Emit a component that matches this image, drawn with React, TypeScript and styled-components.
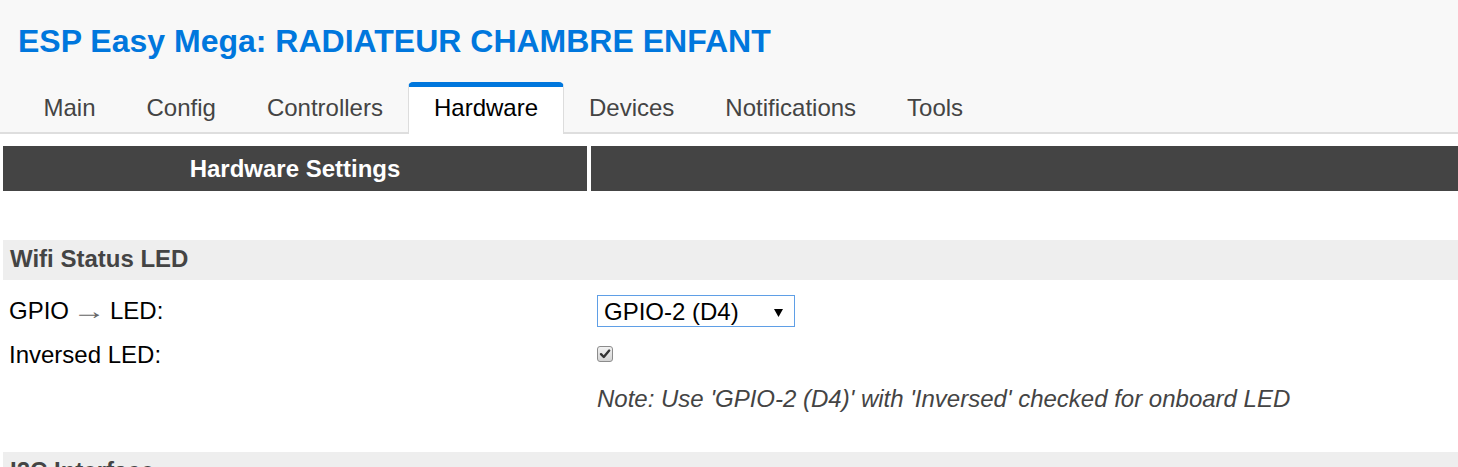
import React from 'react';
import styled, { createGlobalStyle, css } from 'styled-components';

const GlobalStyle = createGlobalStyle`
  html, body { margin: 0; padding: 0; background: #fff; }
  body {
    font-family: "Liberation Sans", Arial, Helvetica, sans-serif;
    font-size: 24px;
    color: #000;
  }
  * { box-sizing: border-box; }
`;

const Header = styled.header`
  background: #f8f8f8;
  border-bottom: 2px solid #dedede;
  padding: 23px 18px 0;
`;

const Title = styled.h1`
  margin: 0;
  font-size: 32px;
  line-height: 37px;
  font-weight: bold;
  color: #07d;
`;

const Tabs = styled.nav`
  display: flex;
  margin-top: 22px;
  margin-bottom: -2px;
`;

const Tab = styled.a<{ $active?: boolean }>`
  display: block;
  padding: 7px 24.5px 12px;
  line-height: 28px;
  font-size: 24px;
  border-style: solid;
  border-width: 5px 1px 0;
  border-color: transparent;
  border-radius: 5px 5px 0 0;
  color: #444;
  text-decoration: none;
  white-space: nowrap;
  ${(p) =>
    p.$active &&
    css`
      color: #000;
      background: #fff;
      border-color: #07d #ddd #fff;
    `}
`;

const Content = styled.main`
  margin-top: 12px;
`;

const TwoCols = styled.div`
  display: grid;
  grid-template-columns: 584px 1fr;
  column-gap: 4px;
  padding-left: 3px;
`;

const HeaderRow = styled(TwoCols)`
  margin-bottom: 49px;
`;

const HeadCell = styled.div`
  background: #444;
  color: #fff;
  font-weight: bold;
  text-align: center;
  height: 45px;
  line-height: 45px;
`;

const SectionTitle = styled.h3`
  margin: 31px 0 9px 3px;
  background: #eee;
  color: #444;
  font-size: 24px;
  font-weight: bold;
  line-height: 28px;
  padding: 5px 7px 7px;
`;

const FormRow = styled(TwoCols)`
  height: 44px;
  align-items: center;
`;

const Cell = styled.div`
  padding-left: 6px;
  line-height: 28px;
  display: flex;
  align-items: center;
`;

const Arrow = styled.span`
  color: #666;
  display: inline-block;
  transform: scaleX(1.4);
  margin: 0 9px 0 8px;
`;

const SelectWrap = styled.div`
  position: relative;
  width: 198px;
  height: 32px;
`;

const Select = styled.select`
  appearance: none;
  -webkit-appearance: none;
  width: 100%;
  height: 100%;
  border: 1px solid #5f9fe6;
  border-radius: 0;
  background: #fff;
  color: #000;
  font-family: inherit;
  font-size: 24px;
  padding: 0 0 0 6px;
  outline: none;
`;

const SelectArrow = styled.svg`
  position: absolute;
  right: 12px;
  top: 14px;
  pointer-events: none;
`;

const CheckBox = styled.span`
  width: 16px;
  height: 16px;
  border: 1px solid #8c8c8c;
  border-radius: 3px;
  background: linear-gradient(#f2f2f2, #d4d4d4);
  display: inline-flex;
  align-items: center;
  justify-content: center;
  margin-bottom: 3px;
`;

const Note = styled.span`
  font-style: italic;
  color: #444;
`;

const tabs = ['Main', 'Config', 'Controllers', 'Hardware', 'Devices', 'Notifications', 'Tools'];

export default function App() {
  return (
    <>
      <GlobalStyle />
      <Header>
        <Title>ESP Easy Mega: RADIATEUR CHAMBRE ENFANT</Title>
        <Tabs>
          {tabs.map((t) => (
            <Tab key={t} href="#" $active={t === 'Hardware'}>
              {t}
            </Tab>
          ))}
        </Tabs>
      </Header>
      <Content>
        <HeaderRow>
          <HeadCell>Hardware Settings</HeadCell>
          <HeadCell />
        </HeaderRow>

        <SectionTitle>Wifi Status LED</SectionTitle>
        <FormRow>
          <Cell>
            GPIO<Arrow>→</Arrow>LED:
          </Cell>
          <Cell>
            <SelectWrap>
              <Select defaultValue="2">
                <option value="-1">- None -</option>
                <option value="2">GPIO-2 (D4)</option>
              </Select>
              <SelectArrow width="9" height="8" viewBox="0 0 9 8">
                <path d="M0 0 L9 0 L4.5 8 Z" fill="#000" />
              </SelectArrow>
            </SelectWrap>
          </Cell>
        </FormRow>
        <FormRow>
          <Cell>Inversed LED:</Cell>
          <Cell>
            <CheckBox role="checkbox" aria-checked="true">
              <svg width="12" height="12" viewBox="0 0 12 12">
                <path d="M2 6.2 L4.8 9 L10.2 2.6" fill="none" stroke="#333" strokeWidth="2.4" strokeLinecap="round" strokeLinejoin="round" />
              </svg>
            </CheckBox>
          </Cell>
        </FormRow>
        <FormRow>
          <Cell />
          <Cell>
            <Note>Note: Use 'GPIO-2 (D4)' with 'Inversed' checked for onboard LED</Note>
          </Cell>
        </FormRow>

        <SectionTitle>I2C Interface</SectionTitle>
        <FormRow>
          <Cell>
            GPIO<Arrow>⇄</Arrow>SDA:
          </Cell>
          <Cell />
        </FormRow>
      </Content>
    </>
  );
}
